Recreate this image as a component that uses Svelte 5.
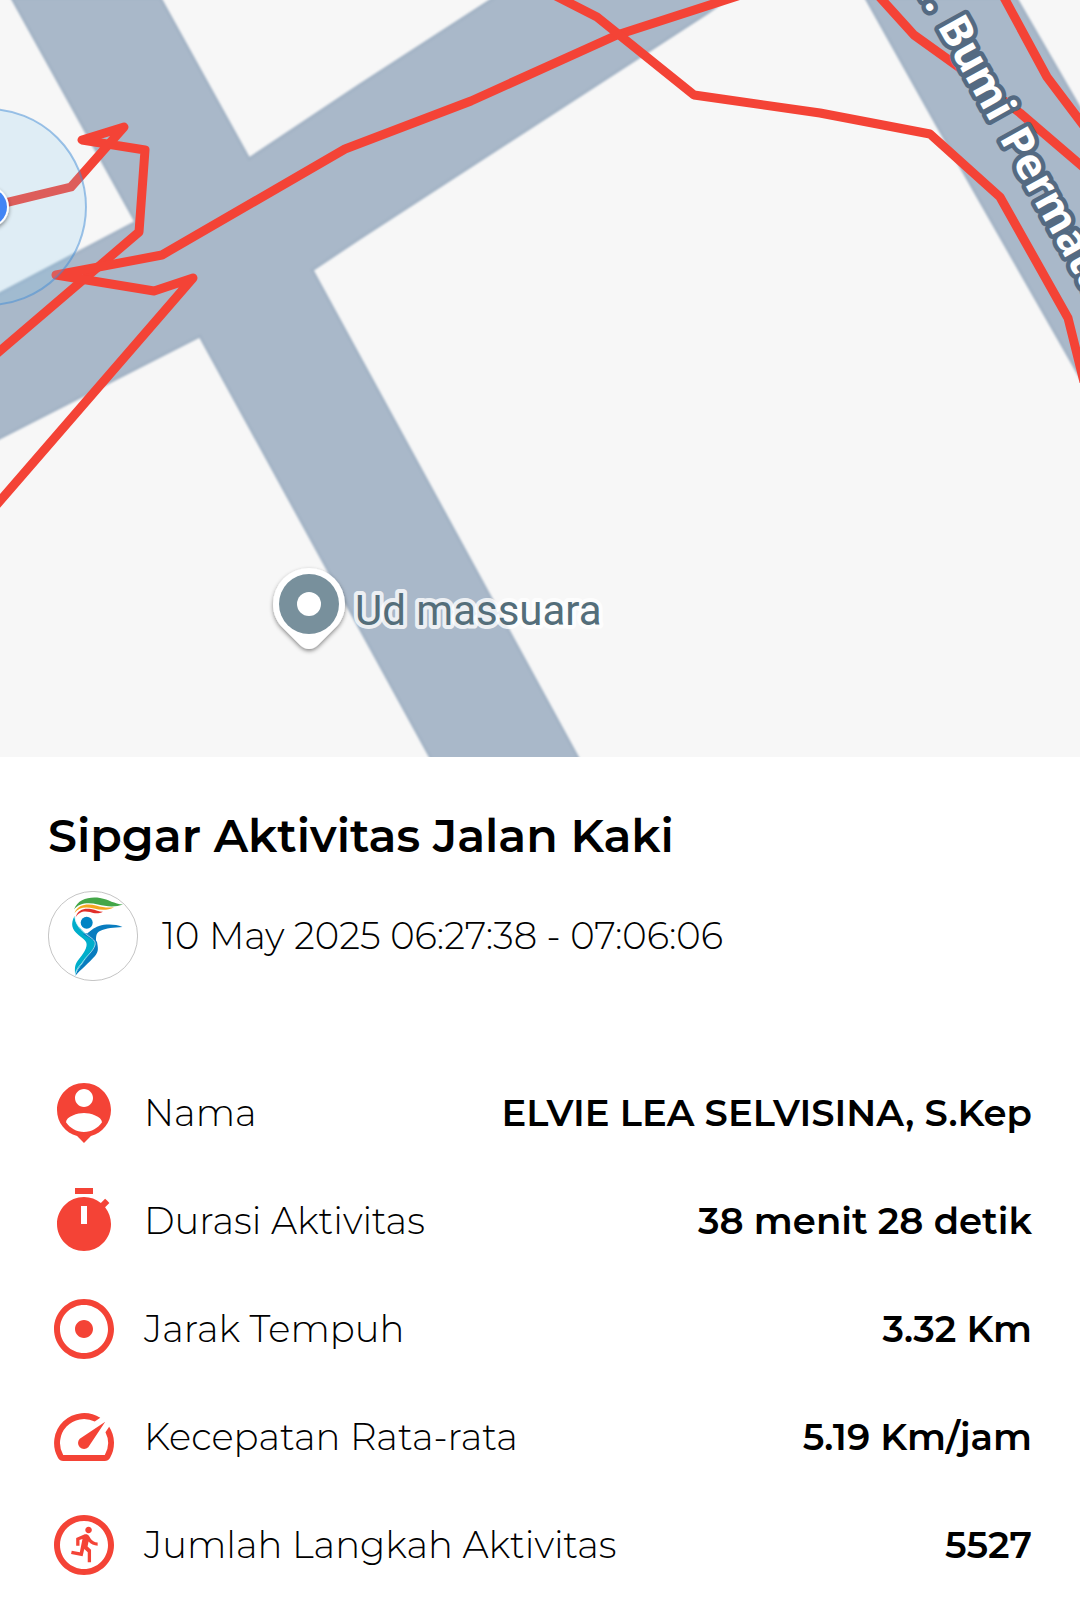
<script>
  const roads = [
    'M12 -2 L136 222 L-10 299 L-10 443 L200 336 L432 760 L579 760 L312 270 L360 238 L707 13 L732 -5 L499 -5 L360 85 L249 159 L160 -2 Z',
    'M866 -2 L937 125 L1090 394 L1090 126 L1016 -2 Z'
  ];

  const tracks = [
    'M-12 207 L71 187 L124 127 L82 140 L145 150 L139 232 L-20 368',
    'M-20 524 L193 278 L154 291 L56 275 L162 255 L345 149 L471 101 L617 35 L750 -8',
    'M550 -7 L597 17 L694 95 L820 113 L930 134 L1000 197 L1068 318 L1084 382',
    'M876 -7 L914 35 L967 73 L1020 113 L1090 173',
    'M1001 -8 L1047 77 L1090 134'
  ];

  const stats = [
    {
      label: 'Nama',
      value: 'ELVIE LEA SELVISINA, S.Kep',
      path: 'M12 2c-4.97 0-9 4.03-9 9 0 4.17 2.84 7.67 6.69 8.69L12 22l2.31-2.31C18.16 18.67 21 15.17 21 11c0-4.97-4.03-9-9-9zm0 2c1.66 0 3 1.34 3 3s-1.34 3-3 3-3-1.34-3-3 1.34-3 3-3zm0 14.3c-2.5 0-4.71-1.28-6-3.22.03-1.99 4-3.08 6-3.08 1.99 0 5.97 1.09 6 3.08-1.29 1.94-3.5 3.22-6 3.22z'
    },
    {
      label: 'Durasi Aktivitas',
      value: '38 menit 28 detik',
      path: 'M15 1H9v2h6V1zm-4 6h2v6h-2V7zm8.03.39l1.42-1.42c-.43-.51-.9-.99-1.41-1.41l-1.42 1.42C16.07 4.74 14.12 4 12 4c-4.97 0-9 4.03-9 9s4.02 9 9 9 9-4.03 9-9c0-2.12-.74-4.07-1.97-5.61z'
    },
    {
      label: 'Jarak Tempuh',
      value: '3.32 Km',
      path: 'M12 2C6.48 2 2 6.48 2 12s4.48 10 10 10 10-4.48 10-10S17.52 2 12 2zm0 18c-4.42 0-8-3.58-8-8s3.58-8 8-8 8 3.58 8 8-3.58 8-8 8zm3-8c0 1.66-1.34 3-3 3s-3-1.34-3-3 1.34-3 3-3 3 1.34 3 3z'
    },
    {
      label: 'Kecepatan Rata-rata',
      value: '5.19 Km/jam',
      path: 'M20.38 8.57l-1.23 1.85a8 8 0 0 1-.22 7.58H5.07A8 8 0 0 1 15.58 6.85l1.85-1.23A10 10 0 0 0 3.35 19a2 2 0 0 0 1.72 1h13.85a2 2 0 0 0 1.74-1 10 10 0 0 0-.27-10.44zm-9.79 6.84a2 2 0 0 0 2.83 0l5.66-8.49-8.49 5.66a2 2 0 0 0 0 2.83z'
    },
    {
      label: 'Jumlah Langkah Aktivitas',
      value: '5527',
      path: 'M12 2C6.48 2 2 6.48 2 12s4.48 10 10 10 10-4.48 10-10S17.52 2 12 2zm0 18c-4.42 0-8-3.58-8-8s3.58-8 8-8 8 3.58 8 8-3.58 8-8 8z',
      runner: 'M13.49 5.48c1.1 0 2-.9 2-2s-.9-2-2-2-2 .9-2 2 .9 2 2 2zm-3.6 13.9l1-4.4 2.1 2v6h2v-7.5l-2.1-2 .6-3c1.3 1.5 3.3 2.5 5.5 2.5v-2c-1.9 0-3.5-1-4.3-2.4l-1-1.6c-.4-.6-1-1-1.7-1-.3 0-.5.1-.8.1l-5.2 2.2v4.7h2v-3.4l1.8-.7-1.6 8.1-4.9-1-.4 2 7 1.4z'
    }
  ];
</script>

<main>
  <svg class="map" viewBox="0 0 1080 757" preserveAspectRatio="xMidYMid slice" role="img" aria-label="Peta rute">
    <defs>
      <filter id="soft" x="-5%" y="-5%" width="110%" height="110%">
        <feGaussianBlur stdDeviation="1" />
      </filter>
      <filter id="shadow" x="-30%" y="-30%" width="160%" height="160%">
        <feDropShadow dx="0" dy="2" stdDeviation="2" flood-color="#000" flood-opacity="0.45" />
      </filter>
    </defs>

    <g filter="url(#soft)">
      {#each roads as d}
        <path class="road" {d} />
      {/each}
    </g>

    {#each tracks as d}
      <path class="track" {d} />
    {/each}

    <circle class="accuracy" cx="-12" cy="207" r="98" />
    <circle cx="-12" cy="207" r="21" fill="#fff" filter="url(#shadow)" />
    <circle cx="-12" cy="207" r="19" fill="#4285f4" />

    <text class="street" text-anchor="end" transform="translate(930 14) rotate(60)">Jl.</text>
    <text class="street" transform="translate(937 26) rotate(61)">Bumi</text>
    <text class="street" transform="translate(999 138) rotate(61)">Permata</text>

    <path
      d="M309 568 a36 36 0 0 1 36 36 c0 10 -4 18 -10 24 L318 645 q-9 8 -18 0 L283 628 c-6 -6 -10 -14 -10 -24 a36 36 0 0 1 36 -36 z"
      fill="#fff"
      filter="url(#shadow)"
    />
    <circle cx="309" cy="604" r="30" fill="#78909c" />
    <circle cx="309" cy="604" r="12" fill="#fff" />
    <text class="place" x="355" y="625">Ud massuara</text>
  </svg>

  <section class="details">
    <h1>Sipgar Aktivitas Jalan Kaki</h1>

    <div class="when">
      <svg class="avatar" viewBox="0 0 90 90" aria-hidden="true">
        <circle cx="45" cy="45" r="44.6" fill="#fff" stroke="#b5b5b5" stroke-width="0.8" />
        <path d="M26 18.500C30 8 41 5.500 52 7c9 1.500 14 6 23 6.500C67 16.500 58 15.500 50 13.500 40 11 31 12 26 18.500z" fill="#43a648" />
        <path d="M26.500 22C30 13 40 12.500 48 14.500c7 2 12 2.500 18 1.700C60 19.500 53 19.500 46 17.500 37 15.500 31 16.500 26.500 22z" fill="#f4a720" />
        <path d="M27.500 26.500C30 18.500 36 17 43 18c5 1 8 2.800 12 2.700C51 23 46 22.500 42 21 36 19.500 31 20.500 27.500 26.500z" fill="#e12f2a" />
        <circle cx="38.700" cy="31.800" r="6" fill="#0084c4" />
        <path d="M74.500 36C67 33 58 33 51 35c-6 2-8 5-12 7.500L48 51c0-6 0-9 4-11 6-3 14-3.500 22.500-4z" fill="#087cbf" />
        <path d="M26.500 25c-4 8-3 13 4 19 5 4 9 6 8 11-1 7-9 13-11 19-1 3-.500 6-.500 10 4-10 12-16 17-23 3-4 5-8 3-11-3-4-10-7-14-12-4-4-6-7-6.500-13z" fill="#00aecb" />
        <path d="M35 43c5 4 11 5 12 9 1 4-5 9-10 17-4 6-8 9-9.800 16C32 79 41 72 47 65c4-5 3-8 2-14-2-4-8-6-11-9z" fill="#087cbf" />
        <path d="M27 26c1 9 6 13 12 18 6 4 9 6 8 10-2 7-9 11-13 18-4 4-6 7-7 13" fill="none" stroke="#d9f3fa" stroke-width="0.700" />
      </svg>
      <time datetime="2025-05-10T06:27:38">10 May 2025 06:27:38 - 07:06:06</time>
    </div>

    <dl>
      {#each stats as stat}
        <div class="row">
          <dt>
            <svg class="icon" viewBox="0 0 24 24" aria-hidden="true">
              <path d={stat.path} />
              {#if stat.runner}
                <path d={stat.runner} transform="translate(6.1 5.100) scale(.55)" />
              {/if}
            </svg>
            {stat.label}
          </dt>
          <dd>{stat.value}</dd>
        </div>
      {/each}
    </dl>
  </section>
</main>

<style>
  :global(body) {
    margin: 0;
    background: #fff;
  }

  main {
    color: #000;
    font-family: Montserrat, Inter, 'Open Sans', sans-serif;
  }

  .map {
    display: block;
    width: 100%;
    height: auto;
    background: #f7f7f7;
  }

  .road {
    fill: #a9b8c9;
    stroke: #a3b3c5;
    stroke-width: 3;
  }

  .track {
    fill: none;
    stroke: #f44336;
    stroke-width: 9;
    stroke-linejoin: round;
  }

  .accuracy {
    fill: rgb(130 200 240 / 0.2);
    stroke: rgb(66 140 214 / 0.5);
    stroke-width: 2;
  }

  .street,
  .place {
    paint-order: stroke;
    stroke-linejoin: round;
  }

  .street {
    font: 700 43px 'Noto Sans', sans-serif;
    fill: #fff;
    stroke: #546a82;
    stroke-width: 9;
  }

  .place {
    font: 400 42px Roboto, sans-serif;
    fill: #546e7a;
    stroke: rgb(255 255 255 / 0.8);
    stroke-width: 8;
  }

  .details {
    padding: 48px 48px 28px;
  }

  h1 {
    margin: 0;
    font-size: 46px;
    font-weight: 600;
    line-height: 62px;
  }

  .when {
    display: flex;
    align-items: center;
    gap: 24px;
    margin-top: 24px;
    font-size: 37px;
    font-weight: 300;
    line-height: 46px;
  }

  .avatar {
    flex: none;
    width: 90px;
    height: 90px;
  }

  dl {
    display: grid;
    gap: 36px;
    margin: 96px 0 0;
    font-size: 37px;
    line-height: 46px;
  }

  .row {
    display: flex;
    align-items: center;
    justify-content: space-between;
    gap: 24px;
  }

  dt {
    display: flex;
    align-items: center;
    gap: 24px;
    font-weight: 300;
  }

  dd {
    margin: 0;
    font-weight: 600;
    text-align: right;
  }

  .icon {
    flex: none;
    width: 72px;
    height: 72px;
    fill: #f44336;
  }
</style>
